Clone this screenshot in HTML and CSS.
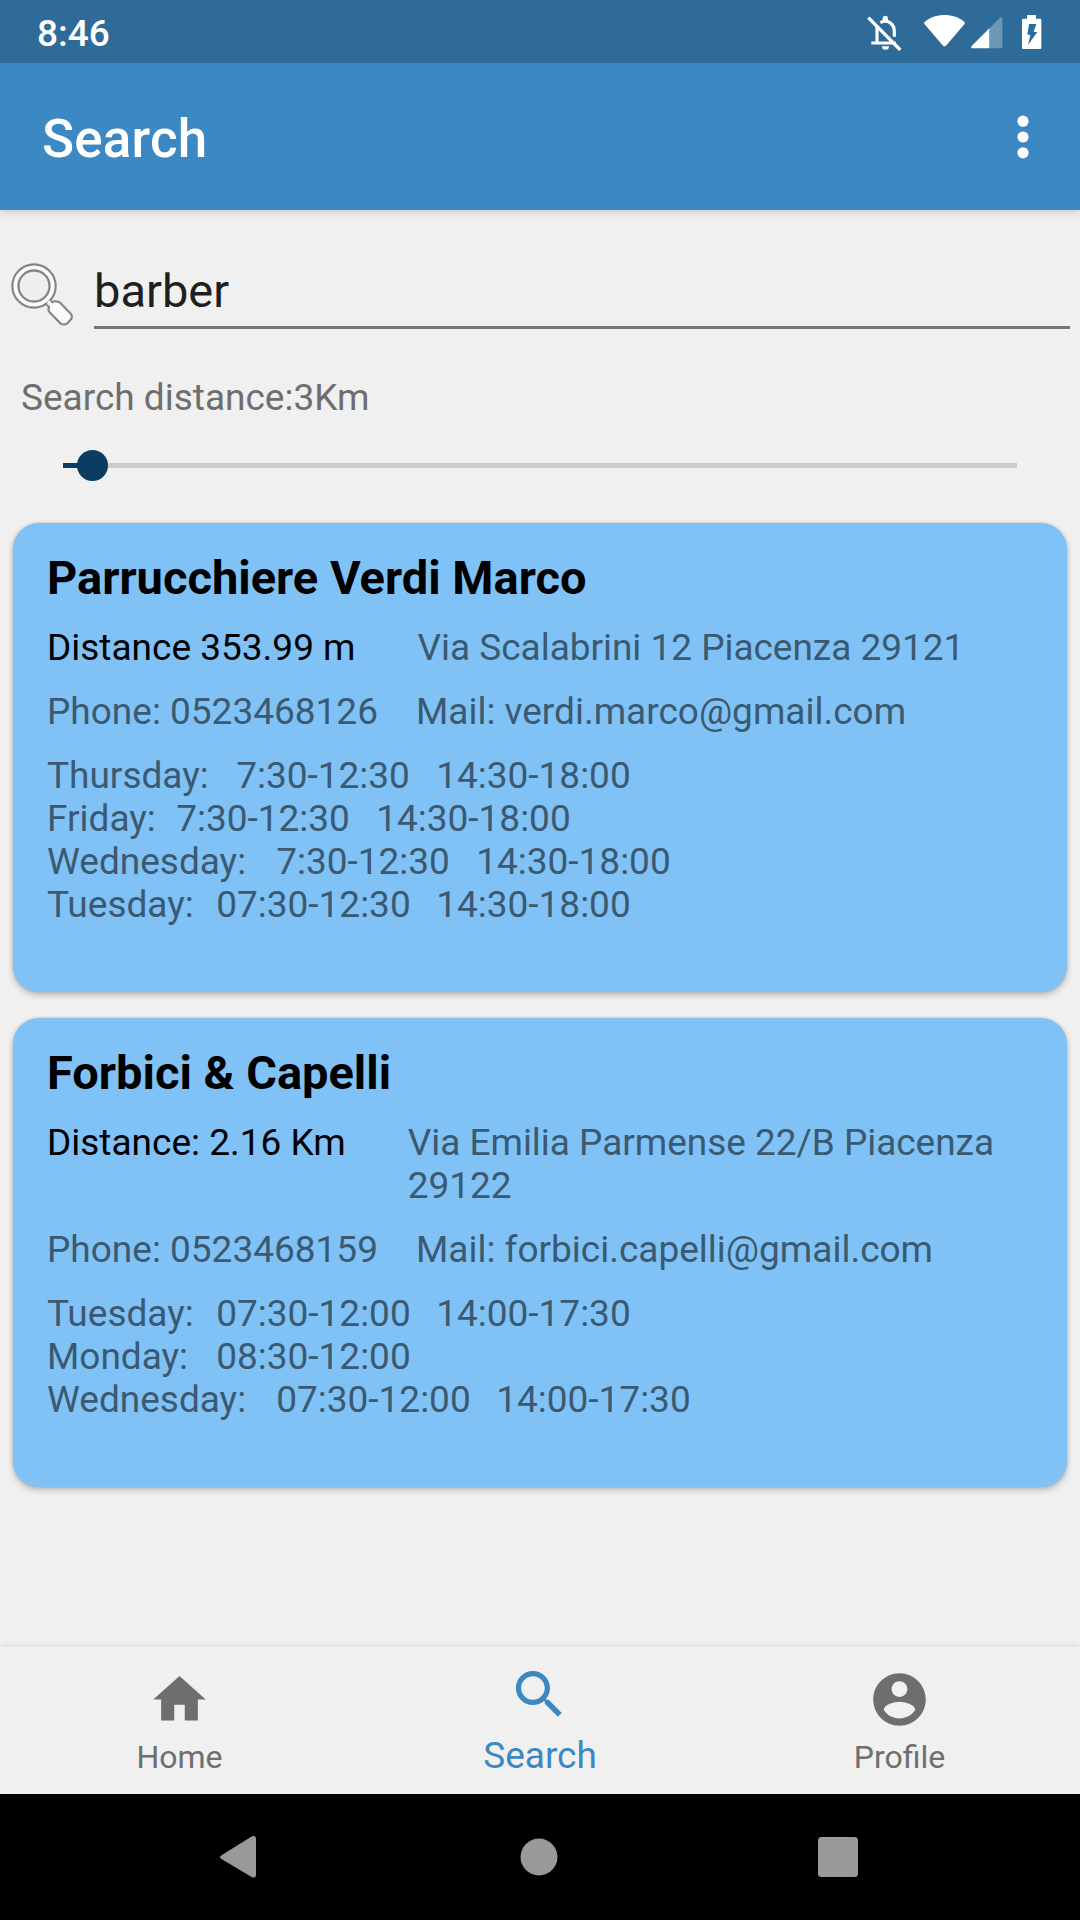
FILE: index.html
```html
<!DOCTYPE html>
<html lang="en">
<head>
<meta charset="utf-8">
<title>Search</title>
<link rel="stylesheet" href="styles.css">
</head>
<body>
<div class="screen">
  <header class="status-bar">
    <span class="clock">8:46</span>
    <div class="status-icons">
      <svg class="icon-bell" viewBox="51 42 105 108">
        <g fill="none" stroke="#fff" stroke-width="9.500">
          <path d="M81 76V124M64 126H137"/>
          <path d="M91 65C112 53 133 68 133 92V107"/>
          <path d="M55 50L151 147" stroke-width="10"/>
        </g>
        <path d="M98 58V52a8 8 0 0 1 16 0V58zM96 136H117a10.500 10.500 0 0 1-21 0z" fill="#fff"/>
      </svg>
      <svg class="icon-wifi" viewBox="222 42 123 96">
        <path d="M223 64C255 35 312 35 344 64Q345 67 343 70L288 134Q283.500 138 279 134L224 70Q222 67 223 64z" fill="#fff"/>
      </svg>
      <svg class="icon-signal" viewBox="362 47 96 96">
        <path d="M456 51V137Q456 141 452 141H417V81L449 49Q456 45 456 51z" fill="#fff" fill-opacity=".3"/>
        <path d="M417 81V141H366Q360 139 364 134z" fill="#fff"/>
      </svg>
      <svg class="icon-battery" viewBox="516 42 60 102">
        <path d="M531 42H558V53H570Q574 53 574 57V140Q574 144 570 144H520Q516 144 516 140V57Q516 53 520 53H531zM537 69L532 100L541 103L534 132L562 93H551L559 69z" fill="#fff" fill-rule="evenodd"/>
      </svg>
    </div>
  </header>

  <div class="app-bar">
    <h1 class="app-title">Search</h1>
    <svg class="icon-more" viewBox="0 0 12 44" fill="#fff">
      <circle cx="6" cy="6.200" r="5.600"/><circle cx="6" cy="22" r="5.600"/><circle cx="6" cy="37.800" r="5.600"/>
    </svg>
  </div>

  <main class="content">
    <div class="search-row">
      <svg class="icon-magnifier" viewBox="30 36 192 192">
        <path d="M139 162L150 151L157 157Q161 153 168 154Q176 154 181 159L211 190Q219 199 213 208L202 220Q192 227 181 220L149 187Q143 180 147 171z" fill="#fafafa" stroke="#858585" stroke-width="6.500" stroke-linejoin="round"/>
        <circle cx="102" cy="108" r="56" fill="none" stroke="#fafafa" stroke-width="18"/>
        <circle cx="102" cy="108" r="65" fill="none" stroke="#858585" stroke-width="6.500"/>
        <circle cx="102" cy="108" r="46.500" fill="#efefef" stroke="#858585" stroke-width="7"/>
        <path d="M141 158L148 151L154 157L144 166z" fill="#fafafa"/>
      </svg>
      <div class="search-field">barber</div>
    </div>
    <div class="distance-label">Search distance:3Km</div>
    <div class="slider"><div class="slider-fill"><div class="slider-thumb"></div></div></div>

    <section class="card">
      <h2 class="card-title">Parrucchiere Verdi Marco</h2>
      <div class="place"><span class="distance">Distance 353.99 m</span><span>Via Scalabrini 12 Piacenza 29121</span></div>
      <div class="contact"><span>Phone: 0523468126</span><span>Mail: verdi.marco@gmail.com</span></div>
      <div class="hours">
        <div class="line"><span class="tab-9">Thursday:</span><span class="tab-10"> 7:30-12:30</span><span> 14:30-18:00</span></div>
        <div class="line"><span class="tab-6">Friday:</span><span class="tab-10"> 7:30-12:30</span><span> 14:30-18:00</span></div>
        <div class="line"><span class="tab-11">Wednesday:</span><span class="tab-10"> 7:30-12:30</span><span> 14:30-18:00</span></div>
        <div class="line"><span class="tab-8">Tuesday:</span><span class="tab-11"> 07:30-12:30</span><span> 14:30-18:00</span></div>
      </div>
    </section>

    <section class="card">
      <h2 class="card-title">Forbici &amp; Capelli</h2>
      <div class="place"><span class="distance">Distance: 2.16 Km</span><span>Via Emilia Parmense 22/B Piacenza 29122</span></div>
      <div class="contact"><span>Phone: 0523468159</span><span>Mail: forbici.capelli@gmail.com</span></div>
      <div class="hours">
        <div class="line"><span class="tab-8">Tuesday:</span><span class="tab-11"> 07:30-12:00</span><span> 14:00-17:30</span></div>
        <div class="line"><span class="tab-8">Monday:</span><span class="tab-11"> 08:30-12:00</span></div>
        <div class="line"><span class="tab-11">Wednesday:</span><span class="tab-11"> 07:30-12:00</span><span> 14:00-17:30</span></div>
      </div>
    </section>
  </main>

  <nav class="bottom-nav">
    <div class="nav-item">
      <svg class="nav-icon" viewBox="0 0 24 24"><path d="M10 20v-6h4v6h5v-8h3L12 3 2 12h3v8z" fill="currentColor"/></svg>
      <span class="nav-label">Home</span>
    </div>
    <div class="nav-item nav-active">
      <svg class="nav-icon" viewBox="0 0 24 24"><path d="M15.500 14h-.79l-.28-.27C15.410 12.590 16 11.110 16 9.500 16 5.910 13.090 3 9.500 3S3 5.910 3 9.500 5.910 16 9.500 16c1.610 0 3.090-.59 4.230-1.570l.27.28v.79l5 4.990L20.490 19l-4.990-5zm-6 0C7.010 14 5 11.990 5 9.500S7.010 5 9.500 5 14 7.010 14 9.500 11.990 14 9.500 14z" fill="currentColor"/></svg>
      <span class="nav-label">Search</span>
    </div>
    <div class="nav-item">
      <svg class="nav-icon" viewBox="0 0 24 24"><path d="M12 2C6.480 2 2 6.480 2 12s4.480 10 10 10 10-4.480 10-10S17.520 2 12 2zm0 3c1.660 0 3 1.340 3 3s-1.340 3-3 3-3-1.340-3-3 1.340-3 3-3zm0 14.200c-2.500 0-4.710-1.280-6-3.220.03-1.990 4-3.080 6-3.080 1.990 0 5.970 1.090 6 3.080-1.290 1.940-3.500 3.220-6 3.220z" fill="currentColor"/></svg>
      <span class="nav-label">Profile</span>
    </div>
  </nav>

  <footer class="system-nav">
    <svg class="sys-back" viewBox="0 0 38 44"><path d="M2.500 20.200L33 1.300Q37 0 37 4V39.500Q37 43.500 33 42.200L2.500 24Q-.5 22 2.500 20.200z" fill="#999"/></svg>
    <svg class="sys-home" viewBox="0 0 38 38"><circle cx="19" cy="19" r="18.500" fill="#999"/></svg>
    <svg class="sys-recent" viewBox="0 0 40 40"><rect width="40" height="40" rx="3.500" fill="#999"/></svg>
  </footer>
</div>
</body>
</html>
```
FILE: styles.css
```css
* { box-sizing: border-box; }

body {
  margin: 0;
  background: #f0f0f0;
  font-family: Roboto, "Liberation Sans", sans-serif;
  font-size: 37px;
  line-height: 43px;
  color: #6e6e6e;
}

svg { display: block; flex: none; }
h1, h2 { margin: 0; }

.screen {
  width: 1080px;
  height: 1920px;
  display: flex;
  flex-direction: column;
  overflow: hidden;
}

/* Status bar */
.status-bar {
  flex: none;
  position: relative;
  z-index: 1;
  height: 63px;
  padding: 3px 38px 0 37px;
  display: flex;
  align-items: center;
  justify-content: space-between;
  background: #2e6b98;
}
.clock { color: #fff; font-weight: 500; }
.status-icons { display: flex; align-items: flex-start; height: 37px; }
.icon-bell { width: 35px; height: 36px; margin-right: 22px; }
.icon-wifi { width: 41px; height: 32px; margin-right: 6px; }
.icon-signal { width: 32px; height: 32px; margin: 2px 19px 0 0; }
.icon-battery { width: 20px; height: 34px; }

/* App bar */
.app-bar {
  flex: none;
  height: 147px;
  padding: 0 51px 0 42px;
  display: flex;
  align-items: center;
  justify-content: space-between;
  background: #3c88c2;
  box-shadow: 0 2px 8px rgba(0, 0, 0, .18);
}
.app-title {
  padding-top: 5px;
  font-size: 53px;
  line-height: 62px;
  font-weight: 500;
  letter-spacing: .15px;
  color: #fff;
}
.icon-more { width: 12px; height: 44px; }

/* Search controls */
.content { flex: 1; padding: 52px 13px 0; }
.search-row { display: flex; margin-right: -3px; }
.icon-magnifier { width: 64px; height: 64px; margin-left: -3px; }
.search-field {
  flex: 1;
  height: 67px;
  margin-left: 20px;
  padding-top: 1px;
  border-bottom: 3px solid #767676;
  font-size: 47px;
  line-height: 55px;
  color: #1f1f1f;
}
.distance-label { margin: 47px 0 0 8px; }
.slider {
  height: 5px;
  margin: 44px 50px 55px;
  background: #ccc;
}
.slider-fill {
  position: relative;
  width: 29px;
  height: 5px;
  background: #0b3c61;
}
.slider-thumb {
  position: absolute;
  right: -16px;
  top: -13px;
  width: 31px;
  height: 31px;
  border-radius: 50%;
  background: #0b3c61;
}

/* Result cards */
.card {
  height: 469px;
  margin-bottom: 26px;
  padding: 27px 34px 0;
  display: flex;
  flex-direction: column;
  gap: 21px;
  border-radius: 26px;
  background: #80c2f5;
  box-shadow: 0 3px 6px rgba(0, 0, 0, .24), 0 0 3px rgba(0, 0, 0, .14);
  color: #3b5971;
}
.card-title {
  font-size: 47px;
  line-height: 55px;
  font-weight: 700;
  color: #000;
}
.place { display: flex; gap: 62px; letter-spacing: -.03px; }
.distance { flex: none; letter-spacing: 0; color: #000; }
.contact { display: flex; gap: 38px; }
.line { display: flex; white-space: pre; }
.tab-6 { width: 120px; }
.tab-8 { width: 160px; }
.tab-9 { width: 180px; }
.tab-10 { width: 200px; }
.tab-11 { width: 220px; }

/* Bottom navigation */
.bottom-nav {
  flex: none;
  height: 147px;
  display: flex;
  background: #f0f0f0;
  box-shadow: 0 -1px 7px rgba(0, 0, 0, .09);
}
.nav-item {
  flex: 1;
  padding-bottom: 18px;
  display: flex;
  flex-direction: column;
  align-items: center;
  justify-content: flex-end;
  gap: 7px;
}
.nav-icon { width: 63px; height: 63px; margin-right: 2px; }
.nav-label {
  margin-right: 1px;
  font-size: 32px;
  line-height: 38px;
}
.nav-active { padding-bottom: 17px; gap: 8px; color: #3c88c2; }
.nav-active .nav-label { margin-right: 0; font-size: 37px; line-height: 43px; }

/* System navigation */
.system-nav {
  flex: none;
  height: 126px;
  padding: 0 222px 0 219px;
  display: flex;
  align-items: center;
  justify-content: space-between;
  background: #000;
}
.sys-back { width: 38px; height: 44px; }
.sys-home { width: 38px; height: 38px; margin-left: 3px; }
.sys-recent { width: 40px; height: 40px; }
```
